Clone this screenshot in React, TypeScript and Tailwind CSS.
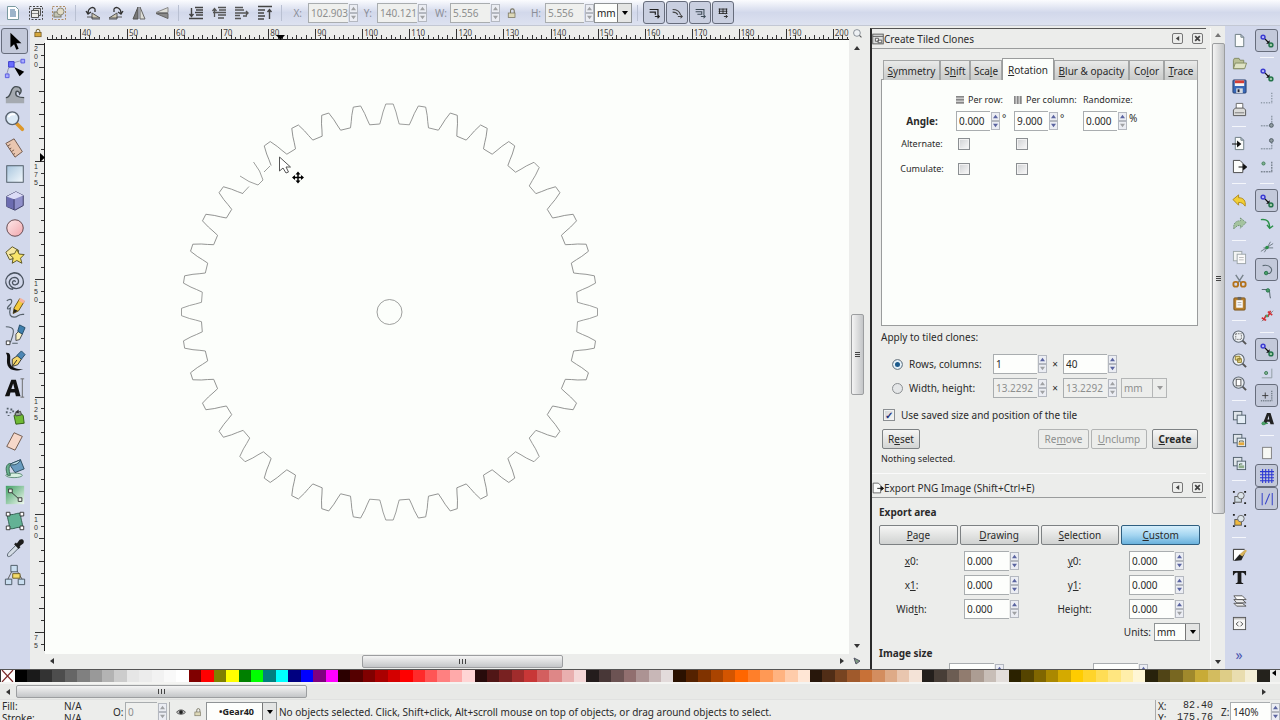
import type { ReactNode } from "react";

const bar = "bg-[#d2d8eb]";

/* ---------- icons, drawn on a 16px grid ---------- */

const sheet = <path d="M3.5 1.5h6l3 3v10h-9z M9.5 1.5v3h3" fill="#fbfcfb" stroke="#6b7b80" />;

const node = (
  <>
    <path d="M5 5l5 5" stroke="#111" strokeWidth="1.4" />
    <path d="M11 7v4H7z" fill="#111" />
    <circle cx="3.5" cy="3.5" r="2.2" fill="#b9bdfb" stroke="#3c3cd0" strokeWidth="1.7" />
    <circle cx="12.5" cy="12.5" r="2.2" fill="#9cc8a4" stroke="#23734a" strokeWidth="1.7" />
  </>
);

const lens = (
  <>
    <path d="M11 11l4 4" stroke="#555" strokeWidth="2" />
    <circle cx="7" cy="7" r="6" fill="#eef1f4" stroke="#5c6570" strokeWidth="1.2" />
  </>
);

const padlock = (
  <>
    <path d="M5 7V5a3 3 0 0 1 6 0v2" fill="none" stroke="#6f6132" strokeWidth="1.6" />
    <rect x="3" y="7" width="10" height="7" fill="#d6a83c" stroke="#5b4614" />
  </>
);

const openLock = (
  <>
    <path d="M6 8V5a2.5 2.5 0 0 1 5 0v3" fill="none" stroke="#77735f" strokeWidth="1.4" />
    <rect x="3" y="8" width="9" height="6" fill="#ddd8b8" stroke="#77735f" />
  </>
);

const copies = (
  <>
    <rect x="1.5" y="1.5" width="9" height="9" fill="#dfe5ea" stroke="#51606c" />
    <rect x="5.5" y="5.5" width="9" height="9" fill="#e4edf5" stroke="#51606c" />
  </>
);

const groupBox = (fill: string) => (
  <>
    <path d="M1 1h2v2H1zM13 1h2v2h-2zM1 13h2v2H1zM13 13h2v2h-2z" fill="#222" />
    <rect x="3" y="7" width="7" height="6" fill={fill} stroke="#555" />
    <circle cx="9.5" cy="6" r="3.5" fill="#dce4ea" stroke="#666" />
  </>
);

const icons: Record<string, ReactNode> = {
  // selector bar
  layers: (
    <>
      <path d="M2.5 1.5h8l3 3v10h-11z" fill="#fff" stroke="#7a9aa0" />
      <path d="M5 5h5M5 7h6M5 9h6M5 11h6" stroke="#3c6a96" strokeWidth="1.2" />
    </>
  ),
  selectAll: (
    <>
      <rect x="1.5" y="1.5" width="13" height="13" fill="none" stroke="#444" strokeDasharray="2 1.5" />
      <path d="M5.500 3.500h7v7h-7z" fill="#d9d9d6" stroke="#555" />
      <path d="M3.500 5.500h7v7h-7z" fill="#ececea" stroke="#555" />
      <path d="M4 8.500h6" stroke="#888" />
    </>
  ),
  selectLayer: (
    <>
      <rect x="1.5" y="1.5" width="13" height="13" fill="none" stroke="#ae8b63" strokeDasharray="2 1.5" />
      <rect x="3" y="7" width="7" height="5" fill="#c3c5b5" stroke="#7a7868" />
      <circle cx="9.5" cy="6.5" r="3.5" fill="#e2dcc6" stroke="#8a8878" />
    </>
  ),
  rotateLeft: (
    <>
      <path d="M7 8l8 5H7z" fill="#cfc9b4" stroke="#555" />
      <path d="M3 8C3 3 8 1 10 4v3M1 6l2 3 3-2" fill="none" stroke="#333" strokeWidth="1.3" />
      <path d="M2 12h5v2h8" stroke="#555" />
    </>
  ),
  rotateRight: (
    <>
      <path d="M9 8l-8 5h8z" fill="#cfc9b4" stroke="#555" />
      <path d="M13 8c0-5-5-7-7-4v3M15 6l-2 3-3-2" fill="none" stroke="#333" strokeWidth="1.3" />
      <path d="M14 12H9v2H1" stroke="#555" />
    </>
  ),
  flipH: (
    <>
      <path d="M7 2v12H2z" fill="#777" stroke="#555" />
      <path d="M9 2v12h5z" fill="#deded8" stroke="#666" />
    </>
  ),
  flipV: (
    <>
      <path d="M2 7.5l12-5v5z" fill="#deded8" stroke="#888" />
      <path d="M2 8.5l12 5v-5z" fill="#8a8a8a" stroke="#666" />
    </>
  ),
  toBottom: <path d="M7 2.500h8M8 5h7M7 7.500h8M8 10h7M1 13.500h14M3.500 3v8M1.500 9l2 2.500 2-2.500" fill="none" stroke="#444" strokeWidth="1.4" />,
  lower: <path d="M7 2.500h8M8 5h7M2 7.500h13M7 10h8M7 13h6M3.500 4v8M1.500 6l2-2.500 2 2.500" fill="none" stroke="#555" strokeWidth="1.3" />,
  raise: <path d="M1 2.500h8M1 5h9M1 8h13M1 10.500h5M1 13.500h6M12 10l2-2-2-2M9 11h4" fill="none" stroke="#555" strokeWidth="1.4" />,
  toTop: <path d="M1 1.500h14M1 5h7M1 8h6M1 11h7M1 14h6M12.500 14V5M10.500 7l2-2.500 2 2.500" fill="none" stroke="#444" strokeWidth="1.4" />,
  scaleStroke: <path d="M3 4h9.500v6M3 7h6.500v3M9 12h5M12 10l2 2-2 2" fill="none" stroke="#222" strokeWidth="1.4" />,
  scaleRadius: <path d="M3 4c5 0 8 2 9 6M3 7c3 0 5 1 6 3M9 12h5M12 10l2 2-2 2" fill="none" stroke="#444" strokeWidth="1.2" />,
  moveGradient: <path d="M3 4h9.500v6M3 6.500h7v3H5M9 12h5M12 10l2 2-2 2" fill="none" stroke="#3c4a55" strokeWidth="1.2" />,
  movePattern: <path d="M3 3.500h10M3 6h10M3 8.500h10M4 3v6M8 3v6M12 3v6M9 12h4M11 10l2 2-2 2" fill="none" stroke="#222" />,

  // commands bar
  new: sheet,
  open: (
    <>
      <path d="M1.500 4.500l1-2h5l1 2h4v9h-11z" fill="#bac096" stroke="#818a62" />
      <path d="M3.500 7.500h12l-2 6h-12z" fill="#dfe3c4" stroke="#818a62" />
    </>
  ),
  save: (
    <>
      <rect x="1" y="1" width="14" height="14" rx="1" fill="#3868b8" stroke="#27406e" />
      <path d="M3 1.500h10v6H3z" fill="#f5f5f5" />
      <path d="M3 1.500h10v3H3z" fill="#d43d35" />
      <path d="M4.500 10h7v5h-7z" fill="#d5dae0" />
      <path d="M6 11h2v3H6z" fill="#223" />
    </>
  ),
  print: (
    <>
      <path d="M4.500 1.500h7v6h-7z" fill="#fff" stroke="#666" />
      <path d="M1.500 8.500l2-2h9l2 2v6h-13z" fill="#dcdcda" stroke="#555" />
      <path d="M3 11.500h10" stroke="#777" />
    </>
  ),
  import: (
    <>
      {sheet}
      <path d="M0 8.500h8M6 6l3 2.500L6 11z" fill="#111" stroke="#111" strokeWidth="1.2" />
    </>
  ),
  export: (
    <>
      <path d="M1.500 1.500h7l3 3v10h-10z" fill="#fbfcfb" stroke="#444" />
      <path d="M7 8.500h7M12.500 6l3 2.500-3 2.500z" fill="#111" stroke="#111" strokeWidth="1.2" />
    </>
  ),
  undo: <path d="M1 7l6-5v3c5 0 8 3 7 9-2-3-4-4-7-4v3z" fill="#f2cf35" stroke="#b08a1c" />,
  redo: <path d="M15 7L9 2v3c-5 0-8 3-7 9 2-3 4-4 7-4v3z" fill="#a4c39f" stroke="#6c8d70" strokeDasharray="1.5 1" />,
  copy: (
    <>
      <rect x="1.5" y="1.5" width="9" height="10" fill="#f3f4f3" stroke="#9da5a8" />
      <rect x="5.5" y="4.5" width="9" height="10" fill="#fafafa" stroke="#9da5a8" />
      <path d="M7.500 8h5M7.500 10.500h5" stroke="#bbb" />
    </>
  ),
  cut: (
    <>
      <path d="M4 2l6 9M12 2L6 11" stroke="#77828a" strokeWidth="1.5" />
      <rect x="1.5" y="9.5" width="5" height="5" rx="2" fill="none" stroke="#b3721c" strokeWidth="2" />
      <rect x="9.5" y="9.5" width="5" height="5" rx="2" fill="none" stroke="#b3721c" strokeWidth="2" />
    </>
  ),
  paste: (
    <>
      <rect x="2" y="2" width="12" height="13" rx="1" fill="#b9812e" stroke="#7c531a" />
      <path d="M4.500 4.500h7v8h-7z" fill="#fafafa" />
      <path d="M6 1h4v3H6z" fill="#666" />
      <path d="M6 7h4M6 9.500h4" stroke="#aaa" />
    </>
  ),
  zoomSel: (
    <>
      {lens}
      <rect x="4" y="4" width="6" height="6" fill="none" stroke="#666" strokeDasharray="1.5 1" />
    </>
  ),
  zoomDraw: (
    <>
      {lens}
      <path d="M3.500 3.500h5v4h-5zM6 6h4v4H6z" fill="#eadb8e" stroke="#8c7a2c" />
    </>
  ),
  zoomPage: (
    <>
      {lens}
      <rect x="4.5" y="3.5" width="5" height="7" fill="#fff" stroke="#555" />
    </>
  ),
  duplicate: copies,
  clone: (
    <>
      {copies}
      <path d="M8 10V8.500h4V10" fill="none" stroke="#664" />
      <path d="M7 10h6v3H7z" fill="#e6aa3c" />
    </>
  ),
  unlink: (
    <>
      {copies}
      <path d="M8 10V8.500h3" fill="none" stroke="#464" />
      <path d="M7 10h6v3H7z" fill="#8fae8b" />
    </>
  ),
  group: groupBox("#d2dee5"),
  ungroup: groupBox("#f0b93c"),
  fillStroke: (
    <>
      <path d="M1 2h13L1 15z" fill="#fff" />
      <path d="M1.500 14.500v-12h12" fill="none" stroke="#222" />
      <path d="M2 15L8 8l6-2-4 8z" fill="#222" />
      <path d="M8 8l6-5 2 1-5 6z" fill="#d8b35c" />
    </>
  ),
  textTool: <path d="M1 1h14v4.500h-1C13.500 3.500 12.500 3 10 3v9.500c0 1 .5 1.500 2 1.500v1H4v-1c1.500 0 2-.5 2-1.500V3c-2.500 0-3.500.5-4 2.500H1z" fill="#1c1c1c" />,
  layersDlg: (
    <>
      <path d="M2 11h9l4 3H5z" fill="#eee" stroke="#555" />
      <path d="M2 7h9l4 3.500H5z" fill="#eee" stroke="#555" />
      <path d="M2 3h9l4 4H5z" fill="#fff" stroke="#555" />
    </>
  ),
  xml: (
    <>
      <rect x="1.5" y="1.5" width="13" height="13" fill="#f7f7f7" stroke="#555" />
      <path d="M2 3h12" stroke="#aaa" />
      <path d="M7 6L4.500 8.500 7 11M9 6l2.500 2.500L9 11" fill="none" stroke="#444" />
    </>
  ),

  // snap bar
  snap: node,
  snapBox: <path d="M1 13.500h13M13.500 2v11" stroke="#687781" strokeDasharray="1.5 1.5" />,
  snapEdge: (
    <>
      <path d="M1 13.500h13M13.500 2v11" stroke="#687781" strokeDasharray="2 1" />
      <circle cx="13" cy="13" r="2.2" fill="#8e9a9f" stroke="#4b5860" />
    </>
  ),
  snapCorner: (
    <>
      <path d="M1 13.500h12.500V2" fill="none" stroke="#687781" strokeDasharray="2 1" />
      <circle cx="13" cy="4" r="2.2" fill="#8e9a9f" stroke="#4b5860" />
    </>
  ),
  snapCenter: (
    <>
      <path d="M1 13.500h13M13.500 2v11" stroke="#46525a" strokeDasharray="2 1" />
      <circle cx="4" cy="4" r="1.8" fill="#7fb08f" stroke="#3b7a55" />
    </>
  ),
  snapPath: <path d="M1 3c7-1 10 2 10 10M8 9l3 4 4-3" fill="none" stroke="#2b9049" strokeWidth="1.6" />,
  snapCross: (
    <>
      <path d="M1 13L15 4M4 9h11M5 14l7-12" stroke="#66737c" />
      <circle cx="8" cy="8.5" r="2" fill="#2b9049" />
    </>
  ),
  snapCusp: (
    <>
      <path d="M3 3c9-2 13 5 8 9H6" fill="none" stroke="#5c6a74" strokeWidth="1.2" />
      <circle cx="7" cy="11.5" r="2" fill="#4b9c68" stroke="#23734a" />
    </>
  ),
  snapSmooth: (
    <>
      <path d="M2 4h6c5 0 2 6 4 10" fill="none" stroke="#5c6a74" strokeWidth="1.2" />
      <circle cx="9" cy="5" r="2" fill="#4b9c68" stroke="#23734a" />
    </>
  ),
  snapMid: (
    <>
      <path d="M2 14l4-4M10 7l5-5" stroke="#777" />
      <path d="M2 10l5 3M9 3l5 4M4 13l3-6M9 9l3-7" stroke="#d12f33" strokeWidth="1.7" />
      <circle cx="8" cy="8" r="1.6" fill="#4b9c68" />
    </>
  ),
  snapObj: (
    <>
      <path d="M2 13.500h11.500V3" fill="none" stroke="#8c989e" />
      <circle cx="7" cy="8" r="1.8" fill="#7fb08f" stroke="#3b7a55" />
    </>
  ),
  snapRot: (
    <>
      <path d="M1 13.500h13M13.500 2v11" stroke="#46525a" strokeDasharray="1.5 1" />
      <path d="M6 4v7M2.500 7.500h7" stroke="#333" />
    </>
  ),
  snapText: (
    <>
      <path d="M3 14L8 1h4l4 13h-4l-1-3H8l-1 3zM8.500 8.500h2L10 4z" fill="#222" fillRule="evenodd" />
      <path d="M2 13h7" stroke="#2b9049" strokeWidth="1.3" />
      <circle cx="4" cy="13" r="2.2" fill="#4b9c68" />
    </>
  ),
  snapPage: <rect x="3" y="1.5" width="10" height="13" fill="#f7f8f4" stroke="#777" />,
  snapGrid: <path d="M3 0v16M6.500 0v16M10 0v16M13.500 0v16M0 3h16M0 6.500h16M0 10h16M0 13.500h16" stroke="#2a36d4" strokeWidth="1.2" />,
  snapGuide: <path d="M2.500 1v14M6 14L11 2M14 1v14" stroke="#3b48c9" strokeWidth="1.2" />,

  // small ones
  padlock,
  openLock,
  lens,
  eye: (
    <>
      <path d="M1 8.500c3-5 11-5 14 0-3 4-11 4-14 0z" fill="#bbb" stroke="#333" strokeWidth="1.3" />
      <circle cx="8" cy="8" r="3" fill="#222" />
    </>
  ),
  clones: (
    <>
      <rect x="1" y="1.5" width="14" height="13" fill="#dcdedd" stroke="#555" strokeWidth="1.2" />
      <path d="M1 4.500h14M4.500 7h4v4h-4zM8 9.500h5v3.500H8z" fill="#f6f6f6" stroke="#555" strokeWidth="1.2" />
    </>
  ),
};

/* ---------- toolbox, drawn on a 24px grid ---------- */

const tools: [string, ReactNode][] = [
  ["Select", <path d="M7 3v16l4-3.500 2.500 6 2.500-1-2.500-6H19z" fill="#000" />],
  [
    "Edit nodes",
    <>
      <path d="M3 21C4 9 9 5 21 4" fill="none" stroke="#8c92a8" />
      <path d="M1.500 18.500h4v4h-4zM18.500 2.500h4v4h-4z" fill="#a9acff" stroke="#5558e0" />
      <path d="M5 5h6v6H5z" fill="#6a6dff" stroke="#3436c8" />
      <path d="M11 11l11 5-5 5z" fill="#000" />
    </>,
  ],
  [
    "Tweak",
    <>
      <path d="M2 16c7 0 4-12 11-12 6 0 7 5 4 8 0-3-3-4-4-2-1 4 2 6 9 6v6H2z" fill="#a5aab0" />
      <path d="M2 16c7 0 4-12 11-12 6 0 7 5 4 8 0-3-3-4-4-2-1 4 2 6 9 6" fill="none" stroke="#444c50" strokeWidth="1.5" />
    </>,
  ],
  [
    "Zoom",
    <>
      <path d="M14 15l6 6" stroke="#dd982a" strokeWidth="4" strokeLinecap="round" />
      <circle cx="9" cy="9" r="7" fill="#dceaf6" stroke="#58626e" strokeWidth="1.5" />
      <path d="M5 8c1-3 4-4 7-3" fill="none" stroke="#fff" strokeWidth="2" />
    </>,
  ],
  [
    "Measure",
    <>
      <path d="M2 7l9-5 9 14-8 6z" fill="#e9c6b0" stroke="#6b5346" />
      <path d="M4 10l3-2M6 13l2-1M8 16l3-2M10 19l2-1" stroke="#6b5346" />
    </>,
  ],
  ["Rectangle", <rect x="3" y="3" width="18" height="18" fill="url(#blue)" stroke="#47545f" />],
  [
    "3D box",
    <>
      <path d="M3 7l10-5 8 4v11l-9 5-9-4z" fill="#8f8fc9" stroke="#34345e" />
      <path d="M3 7l8 3v11l-8-3z" fill="#6c6cb0" />
      <path d="M3 7l10-5 8 4-10 4z" fill="#dcdcf6" />
      <path d="M11 10v11" stroke="#34345e" />
    </>,
  ],
  ["Ellipse", <circle cx="12" cy="12" r="9" fill="url(#pink)" stroke="#5d4146" />],
  [
    "Star",
    <>
      <path d="M2 9l7-6 7 4-2 8-8 2z" fill="#f6e7a0" stroke="#55501f" />
      <path d="M14 6l2.500 5 5.500.5-4 4 1.500 5.500-5.500-3-5 3 1-6-4-3.500 5.500-1z" fill="#f9e46a" stroke="#55501f" />
    </>,
  ],
  [
    "Spiral",
    <path
      d="M12 13c1-1-1-2-2-1-2 2 0 5 3 4 4-1 4-7-1-8-5 0-8 5-5 9 4 5 12 4 14-2 1-7-4-12-10-12C5 4 1 9 2 14c1 4 4 7 8 7"
      fill="none"
      stroke="#4a5360"
      strokeWidth="1.4"
    />,
  ],
  [
    "Pencil",
    <>
      <path d="M3 4c6-4 7 1 3 5s-2 5 1 3c-2 7 0 10 4 10 5 0 4-4 11-3" fill="none" stroke="#56616b" strokeWidth="1.3" />
      <path d="M10 18l1-6 6-10 5 3-6 10z" fill="#f4ca3c" stroke="#5e4b12" />
      <path d="M10 18l1-5 4 2z" fill="#222" />
      <path d="M16 4l2-3 5 3-2 3z" fill="#f6b29c" />
    </>,
  ],
  [
    "Bezier",
    <>
      <path d="M2 3c10 0 10 4 5 17M9 21h6" fill="none" stroke="#56616b" strokeWidth="1.2" />
      <path d="M2.500 18.500h4v4h-4z" fill="#fff" stroke="#333" />
      <path d="M13 18l0-7 3-3 4 3-3 6z" fill="#f6efc2" stroke="#444" />
      <path d="M15 8l2-7 6 3-3 7z" fill="#3f7fae" stroke="#234a66" />
    </>,
  ],
  [
    "Calligraphy",
    <>
      <path d="M2 3c7-1 4 6 5 12 1 4 6 6 14 6-9 3-15 1-17-4C2 11 5 7 2 3z" fill="#111" />
      <path d="M9 18l0-8 6-4 4 4-4 6z" fill="#f5d76b" stroke="#333" />
      <path d="M14 6l5-5 4 4-4 5z" fill="#4c86b4" stroke="#234a66" />
      <path d="M9 18l5-7" stroke="#222" />
    </>,
  ],
  [
    "Text",
    <>
      <path d="M1 21L8 3h5l5 18h-5l-1-4H7l-1 4zM8 13h3.500L10 7z" fill="#111" fillRule="evenodd" />
      <path d="M18 2h4M20 2v20M18 22h4" stroke="#666" />
    </>,
  ],
  [
    "Spray",
    <>
      <path d="M11 13c0-3 9-4 10 0l1 8-9 1z" fill="#6fba35" stroke="#2e5a14" />
      <path d="M12 10l6-2 1 4-6 1z" fill="#9aa59c" stroke="#444" />
      <path d="M12 9l4-3v4z" fill="#333" />
      <path d="M3 4h2v2H3zM7 5h2v2H7zM2 8h2v2H2zM6 9h2v1H6zM9 7h2v2H9zM4 12h2v1H4z" fill="#56616b" />
    </>,
  ],
  ["Eraser", <path d="M3 18L11 3l9 4-8 15z" fill="#f7d8c9" stroke="#6b5346" />],
  [
    "Paint bucket",
    <>
      <ellipse cx="11" cy="20" rx="9" ry="2.5" fill="#d7efe0" stroke="#5a8a74" />
      <path d="M6 8l12-5 4 10-10 4z" fill="#6a9cc0" stroke="#29485c" />
      <path d="M6 8l12-5c-1 4-7 7-12 5z" fill="#bfe0e8" stroke="#29485c" />
      <path d="M6 7c-5 2-4 8-2 13h3c-2-6-2-9 0-12z" fill="#68b08c" stroke="#356a50" />
    </>,
  ],
  [
    "Gradient",
    <>
      <rect x="2" y="2" width="20" height="20" fill="url(#green)" />
      <path d="M7 8l10 9" stroke="#333" />
      <path d="M5 5.500h4v4H5zM15.500 15h4v4h-4z" fill="#eef6ee" stroke="#333" />
    </>,
  ],
  [
    "Mesh",
    <>
      <path d="M4 4c7 3 9-2 15 0-2 6 2 9 1 16-6-3-9 2-15 0 2-6-2-9-1-16z" fill="#63b295" stroke="#2b5a4a" />
      <path d="M2.500 2.500h4v4h-4zM17.500 2.500h4v4h-4zM2.500 17.500h4v4h-4zM17.500 17.500h4v4h-4z" fill="#fff" stroke="#333" />
    </>,
  ],
  [
    "Dropper",
    <>
      <path d="M4 21c-1-2 1-4 2-5l7-7 3 3-7 7c-2 2-4 3-5 2z" fill="#d5dde6" stroke="#4e5a66" />
      <path d="M11 8l2-2 1 1 3-4c3-2 6 1 4 4l-4 3 1 1-2 2z" fill="#1c1c1c" />
    </>,
  ],
  [
    "Connector",
    <>
      <path d="M9 7L4 17M14 7l6 10" stroke="#555" />
      <path d="M7.500 1.500h7v7h-7zM1.500 16.500h7v6h-7zM15.500 16.500h7v6h-7z" fill="#c9def0" stroke="#47545f" />
      <path d="M9.500 10.500h8v5h-8z" fill="#f5dc6a" stroke="#6a5a1c" />
    </>,
  ],
];

const commands = [
  "new open save print", "import export", "undo redo", "copy cut paste",
  "zoomSel zoomDraw zoomPage", "duplicate clone unlink", "group ungroup",
  "fillStroke textTool layersDlg xml",
].map((g) => g.split(" "));

// a trailing * marks a toggle that is switched on
const snaps = [
  "snap*", "snap snapBox snapEdge snapCorner snapCenter",
  "snap* snapPath snapCross snapCusp* snapSmooth snapMid",
  "snap* snapObj snapRot* snapText", "snapPage snapGrid* snapGuide*",
].map((g) => g.split(" "));

const palette = (
  "000000 1a1a1a 333333 4d4d4d 666666 808080 999999 b3b3b3 cccccc e6e6e6 ececec f2f2f2 f9f9f9 ffffff " +
  "800000 ff0000 808000 ffff00 008000 00ff00 008080 00ffff 000080 0000ff 800080 ff00ff " +
  "2b0000 550000 800000 aa0000 d40000 ff0000 ff2a2a ff5555 ff8080 ffaaaa ffd5d5 " +
  "280b0b 501616 782121 a02c2c c83737 d35f5f de8787 e9afaf f4d7d7 " +
  "241c1c 483737 6c5353 916f6f ac9393 c8b7b7 e3dbdb " +
  "2b1100 552200 803300 aa4400 d45500 ff6600 ff7f2a ff9955 ffb380 ffccaa ffe6d5 " +
  "28170b 502d16 784421 a05a2c c87137 d38d5f deaa87 e9c6af f4e3d7 " +
  "241f1c 483e37 6c5d53 917c6f ac9d93 c8beb7 e3dedb " +
  "2b2200 554400 806600 aa8800 d4aa00 ffcc00 ffd42a ffdd55 ffe680 ffeeaa fff6d5 " +
  "28220b 504416 786721 a0892c c8ab37 d3bc5f decd87 e9ddaf f4eed7 24221c"
).split(" ");

/* ---------- widgets ---------- */

function Icon({ name, className = "size-4" }: { name: string; className?: string }) {
  return (
    <svg viewBox="0 0 16 16" className={`${className} shrink-0`} fill="none" aria-hidden="true">
      {icons[name]}
    </svg>
  );
}

const arrows = {
  up: "M0 5L3 1l3 4z",
  down: "M0 1l3 4 3-4z",
  left: "M5 0L1 3l4 3z",
  right: "M1 0l4 3-4 3z",
};

function Arrow({ dir, className = "size-1.5 text-[#333]" }: { dir: keyof typeof arrows; className?: string }) {
  return (
    <svg viewBox="0 0 6 6" className={`${className} shrink-0`} aria-hidden="true">
      <path d={arrows[dir]} fill="currentColor" />
    </svg>
  );
}

function Spin({ id, label, value, width, disabled = false, atMin = false }: {
  id?: string;
  label?: string;
  value: string;
  width: string;
  disabled?: boolean;
  atMin?: boolean;
}) {
  const btn = "flex flex-1 items-center justify-center border border-[#b4b8c0] bg-[#ebedf3]";
  const on = "size-[5px] text-[#5a64a0]";
  const off = "size-[5px] text-[#a0a2a4]";

  return (
    <span className={`flex h-5 shrink-0 gap-px ${width}`}>
      <input
        id={id}
        aria-label={label}
        defaultValue={value}
        disabled={disabled}
        className={`min-w-0 flex-1 border border-r-0 border-[#a9adaf] pl-0.5 ${
          disabled ? "bg-[#eff0ee] text-[#8d8f8e]" : "bg-[#fdfefc] text-[#2a2a2a]"
        }`}
      />
      <span className="flex w-[9px] flex-col py-px">
        <button aria-label="Increase" disabled={disabled} className={btn}>
          <Arrow dir="up" className={disabled ? off : on} />
        </button>
        <button aria-label="Decrease" disabled={disabled || atMin} className={btn}>
          <Arrow dir="down" className={disabled || atMin ? off : on} />
        </button>
      </span>
    </span>
  );
}

function Combo({ id, label, value, className, disabled = false }: {
  id?: string;
  label?: string;
  value: string;
  className: string;
  disabled?: boolean;
}) {
  return (
    <span
      className={`relative flex shrink-0 border ${className} ${
        disabled ? "border-[#b4b6b6] text-[#8d8f8e]" : "border-[#8f9395] bg-[#fdfefc] text-[#222]"
      }`}
    >
      <select id={id} aria-label={label} disabled={disabled} className="min-w-0 flex-1 appearance-none bg-transparent pl-0.5">
        <option>{value}</option>
      </select>
      <span
        className={`pointer-events-none absolute inset-y-0 right-0 flex w-3.5 items-center justify-center border-l ${
          disabled ? "border-[#b4b6b6]" : "border-[#777] bg-[#e4e5e4]"
        }`}
      >
        <Arrow dir="down" className={disabled ? "size-1.5 text-[#999]" : "size-1.5 text-black"} />
      </span>
    </span>
  );
}

function Check({ label, id, checked = false }: { label?: string; id?: string; checked?: boolean }) {
  return (
    <input
      type="checkbox"
      id={id}
      aria-label={label}
      defaultChecked={checked}
      className="size-3 shrink-0 appearance-none border border-[#8b8f92] bg-linear-to-br from-[#cfd1d3] to-[#fafafa] text-center text-[10px] leading-[10px] font-bold text-[#26357c] shadow-[inset_0_0_0_1px_#f2f2f2] checked:before:content-['✓']"
    />
  );
}

function Radio({ id, checked = false }: { id: string; checked?: boolean }) {
  return (
    <input
      type="radio"
      name="tile-mode"
      id={id}
      defaultChecked={checked}
      className="size-[11px] shrink-0 appearance-none rounded-full border border-[#8b8f92] bg-[#e4e6e7] checked:bg-[#1c5a8c] checked:shadow-[inset_0_0_0_2px_#e8f2f8]"
    />
  );
}

// Underlines the mnemonic letter
function Mn({ text, at }: { text: string; at?: number }) {
  if (at === undefined) return <span>{text}</span>;

  return (
    <span>
      {text.slice(0, at)}
      <u>{text[at]}</u>
      {text.slice(at + 1)}
    </span>
  );
}

const Sep = () => <span className="mx-[5px] h-4 w-px shrink-0 bg-[#b9c0d2]" />;

const button = "h-5 rounded-[2px] border border-[#7d8183] bg-linear-to-b from-[#f6f6f5] to-[#d3d5d4]";

/* ---------- selector bar ---------- */

function IconRow({ names }: { names: string }) {
  return names.split(" ").map((n) => (
    <button key={n} aria-label={n} className="flex w-[23px] shrink-0 justify-center">
      <Icon name={n} />
    </button>
  ));
}

function SelectorBar() {
  const lbl = "shrink-0 text-right text-[#8b8e98]";

  return (
    <header className="flex h-[26px] shrink-0 items-center border-b border-[#c3c8d4] bg-linear-to-b from-[#fbfcfe] via-[#d2d8eb] to-[#dde2f0] pl-px">
      <IconRow names="layers selectAll selectLayer" />
      <Sep />
      <IconRow names="rotateLeft rotateRight flipH flipV" />
      <Sep />
      <IconRow names="toBottom lower raise toTop" />
      <Sep />
      <label htmlFor="x" className={`w-[15px] ${lbl}`}>X:</label>
      <span className="w-1.5 shrink-0" />
      <Spin id="x" value="102.903" width="w-[50px]" disabled />
      <label htmlFor="y" className={`w-3.5 ${lbl}`}>Y:</label>
      <span className="w-[5px] shrink-0" />
      <Spin id="y" value="140.121" width="w-[50px]" disabled />
      <label htmlFor="w" className={`w-5 ${lbl}`}>W:</label>
      <span className="w-[3px] shrink-0" />
      <Spin id="w" value="5.556" width="w-[50px]" disabled />
      <button aria-label="Lock ratio" className="flex w-6 shrink-0 justify-center">
        <Icon name="openLock" className="size-3" />
      </button>
      <label htmlFor="h" className={`w-[17px] ${lbl}`}>H:</label>
      <span className="w-1 shrink-0" />
      <Spin id="h" value="5.556" width="w-[49px]" disabled />
      <Combo label="Unit" value="mm" className="h-5 w-[38px]" />
      <Sep />
      {["scaleStroke", "scaleRadius", "moveGradient", "movePattern"].map((n) => (
        <button
          key={n}
          aria-label={n}
          aria-pressed="true"
          className="mr-px flex h-[23px] w-[22px] shrink-0 items-center justify-center rounded-[3px] border border-[#676d7c] bg-[#c9cfe0]"
        >
          <Icon name={n} className="size-3.5" />
        </button>
      ))}
    </header>
  );
}

/* ---------- canvas ---------- */

const MM = 4.705;

function TopRuler() {
  const ticks = Array.from({ length: 171 }, (_, i) => i + 33);

  return (
    <svg width="805" height="14" className="shrink-0" viewBox="45 0 805 14">
      <path d="M47 13.500h803" stroke="#222" />
      {ticks.map((t) => {
        const x = Math.round(80 + (t - 40) * MM) + 0.5;
        if (x < 47) return null;
        const h = t % 10 === 0 ? 11 : t % 2 === 0 ? 5 : 3;
        return <path key={t} d={`M${x} 14v-${h}`} stroke="#333" />;
      })}
      {ticks.filter((t) => t % 10 === 0).map((t) => (
        <text key={t} x={82 + (t - 40) * MM} y="10" fontSize="8" fill="#444">{t}</text>
      ))}
      <path d="M276 9h9l-4.500 5z" fill="#000" />
    </svg>
  );
}

function SideRuler() {
  const ticks = Array.from({ length: 53 }, (_, i) => i);

  return (
    <svg width="15" height="613" className="shrink-0" viewBox="30 40 15 613">
      <path d="M44.500 43v608" stroke="#222" />
      {ticks.map((i) => {
        const y = Math.round(43.5 + i * 11.77) + 0.5;
        if (y > 650) return null;
        const w = i % 10 === 0 ? 9 : i % 2 === 0 ? 5 : 3;
        return <path key={i} d={`M44 ${y}h-${w}`} stroke="#333" />;
      })}
      {[200, 175, 150, 125, 100, 75].map((n, i) =>
        [...String(n)].map((c, j) => (
          <text
            key={`${n}-${j}`}
            x="34"
            y={51 + Math.round(i * 117.7) + j * 8}
            fontSize="7"
            fill="#333"
            className="font-['Liberation_Sans',sans-serif]"
          >
            {c}
          </text>
        ))
      )}
      <path d="M40 153v9l5-4.500z" fill="#000" />
    </svg>
  );
}

// One tooth pointing up, with the root that leads to the next one
const tooth = "M-9.700-188L-8-194-6.500-200-3.700-208H3.700L6.500-200 8-194 9.700-188";
const root = "M9.700-188L19.800-187.200";

function Drawing() {
  const teeth = Array.from({ length: 40 }, (_, i) => i).filter((i) => i !== 35);

  return (
    <svg width="805" height="613" viewBox="45 40 805 613" className="absolute inset-0" fill="none">
      <g transform="translate(389.500 312)" stroke="#858685" strokeWidth="0.8">
        {teeth.map((i) => (
          <path key={i} d={i === 34 ? tooth : `${tooth} ${root}`} transform={`rotate(${i * 9})`} />
        ))}
        <path d="M-146.500-119l6-6.500M-125.500-140l6-6" />
        <path d="M-136-150l6 9 3.500 9-5 5-9-3.500-9-5.500" />
        <circle r="12.5" />
      </g>
      <path d="M279.500 157v14l3.500-3 3 5 2.500-1-2.500-5h4.500z" fill="#fff" stroke="#555" />
      <path d="M293.500 177.500h9M298 173v9" stroke="#000" strokeWidth="1.5" />
      <path d="M292 177.500l3-2.500v5zM304 177.500l-3-2.500v5zM298 171.500l-2.500 3h5zM298 183.500l-2.500-3h5z" fill="#000" />
    </svg>
  );
}

const Grip = ({ vertical = false }: { vertical?: boolean }) => (
  <span
    className={`flex justify-between ${
      vertical
        ? "h-[5px] w-[5px] flex-col *:h-px *:w-full"
        : "h-[5px] w-[7px] *:h-full *:w-px"
    } *:bg-[#444]`}
  >
    <i /><i /><i />
  </span>
);

const thumbH = "flex items-center justify-center rounded-[2px] border border-[#9c9ea0] bg-linear-to-b from-[#f4f4f4] to-[#c4c6c8]";
const thumbV = "flex w-[13px] items-center justify-center rounded-[2px] border border-[#9c9ea0] bg-linear-to-r from-[#f4f4f4] to-[#c4c6c8]";

function Canvas() {
  return (
    <main className="flex min-w-0 flex-1 flex-col bg-[#ecedeb]">
      <div className="flex h-3.5 shrink-0 items-center overflow-hidden">
        <span className="flex w-[15px] shrink-0 justify-center">
          <Icon name="padlock" className="size-2.5" />
        </span>
        <div className="min-w-0 flex-1 overflow-hidden"><TopRuler /></div>
        <span className="flex w-4 shrink-0 justify-center">
          <Icon name="lens" className="size-[9px]" />
        </span>
      </div>
      <div className="flex min-h-0 flex-1">
        <div className="w-[15px] shrink-0 overflow-hidden"><SideRuler /></div>
        <div className="relative min-w-0 flex-1 overflow-hidden bg-[#fcfefb]"><Drawing /></div>
        <div className="flex w-4 shrink-0 flex-col items-center py-[5px]">
          <Arrow dir="up" />
          <span className="grow-[260]" />
          <span className={`h-[81px] ${thumbV}`}><Grip vertical /></span>
          <span className="grow-[246]" />
          <Arrow dir="down" />
        </div>
      </div>
      <div className="flex h-[15px] shrink-0 items-center pb-px pl-[19px]">
        <Arrow dir="left" />
        <span className="grow-[308]" />
        <span className={`h-[13px] w-[201px] ${thumbH}`}><Grip /></span>
        <span className="grow-[277]" />
        <Arrow dir="right" />
        <span className="flex w-5 justify-center pl-1">
          <svg viewBox="0 0 8 8" className="size-2"><path d="M1 1l6 3-4 3z" fill="#7c9a80" stroke="#556" /></svg>
        </span>
      </div>
    </main>
  );
}

/* ---------- dock ---------- */

function PanelTitle({ icon, children }: { icon: string; children: ReactNode }) {
  const small = "flex size-[11px] items-center justify-center rounded-[2px] border border-[#777] text-[#444]";

  return (
    <div className="flex h-5 items-center border-b border-[#9a9c9c] pr-[3px]">
      <Icon name={icon} className="size-3" />
      <h2 className="flex-1 text-[#2c2c2c]">{children}</h2>
      <button aria-label="Iconify" className={`mr-[9px] ${small}`}>
        <Arrow dir="left" className="size-[5px]" />
      </button>
      <button aria-label="Close" className={small}>
        <svg viewBox="0 0 6 6" className="size-[7px]"><path d="M1 1l4 4M5 1L1 5" stroke="currentColor" strokeWidth="1.5" /></svg>
      </button>
    </div>
  );
}

const tabs: [string, number, string][] = [
  ["Symmetry", 0, "w-[57px]"],
  ["Shift", 1, "w-[30px]"],
  ["Scale", 3, "w-[32px]"],
  ["Rotation", 0, "w-[52px]"],
  ["Blur & opacity", 0, "w-[75px]"],
  ["Color", 2, "w-[35px]"],
  ["Trace", 0, "w-[34px]"],
];

function TiledClones() {
  const bars = "size-2 from-[#777] to-[#ddd] bg-[length:3px_3px]";

  return (
    <section>
      <PanelTitle icon="clones">Create Tiled Clones</PanelTitle>
      <div className="pr-2 pl-[9px]">
        <div role="tablist" className="mt-[9px] flex h-[22px] items-end pl-0.5">
          {tabs.map(([name, at, w]) => (
            <button
              key={name}
              role="tab"
              aria-selected={name === "Rotation"}
              className={`shrink-0 border border-b-0 text-center whitespace-nowrap ${w} ${
                name === "Rotation"
                  ? "h-[22px] border-[#9a9c9c] bg-[#fcfefb]"
                  : "h-5 border-[#a3a5a5] bg-linear-to-b from-[#e9eae9] to-[#c9cbca]"
              }`}
            >
              <Mn text={name} at={at} />
            </button>
          ))}
        </div>
        <div role="tabpanel" className="-mt-px grid h-[247px] grid-cols-[74px_58px_69px_1fr] grid-rows-[20px_21px_26px_24px] content-start items-center border border-[#9a9c9c] bg-[#fcfefb] pt-2.5 pr-2">
          <span />
          <span className="flex items-center gap-1 text-[9px]">
            <i className={`${bars} bg-linear-to-b`} />
            Per row:
          </span>
          <span className="flex items-center gap-1 text-[9px] whitespace-nowrap">
            <i className={`${bars} bg-linear-to-r`} />
            Per column:
          </span>
          <span className="text-[9px]">Randomize:</span>

          <b className="pl-1.5 text-center">Angle:</b>
          <span className="flex items-start gap-0.5"><Spin label="Angle per row" value="0.000" width="w-11" /><span className="leading-[14px]">°</span></span>
          <span className="flex items-start gap-0.5"><Spin label="Angle per column" value="9.000" width="w-11" /><span className="leading-[14px]">°</span></span>
          <span className="flex items-start gap-0.5"><Spin label="Randomize angle" value="0.000" width="w-11" atMin /><span className="leading-[14px]">%</span></span>

          <span className="pl-1.5 text-center text-[9px]">Alternate:</span>
          <span className="flex pl-0.5"><Check label="Alternate rows" /></span>
          <span className="flex pl-0.5"><Check label="Alternate columns" /></span>
          <span />

          <span className="pl-1.5 text-center text-[9px]">Cumulate:</span>
          <span className="flex pl-0.5"><Check label="Cumulate rows" /></span>
          <span className="flex pl-0.5"><Check label="Cumulate columns" /></span>
        </div>

        <p className="flex h-[22px] items-center">Apply to tiled clones:</p>
        <div className="mt-1 flex h-6 items-center pl-[11px]">
          <Radio id="rows" checked />
          <label htmlFor="rows" className="w-[90px] pl-[6px]">Rows, columns:</label>
          <Spin label="Rows" value="1" width="w-[54px]" atMin />
          <span className="w-4 text-center">×</span>
          <Spin label="Columns" value="40" width="w-[54px]" />
        </div>
        <div className="flex h-6 items-center pl-[11px]">
          <Radio id="size" />
          <label htmlFor="size" className="w-[90px] pl-[6px]">Width, height:</label>
          <Spin label="Width" value="13.2292" width="w-[54px]" disabled />
          <span className="w-4 text-center">×</span>
          <Spin label="Height" value="13.2292" width="w-[54px]" disabled />
          <span className="w-1" />
          <Combo label="Tile unit" value="mm" className="h-5 w-[46px]" disabled />
        </div>
        <div className="mt-[3px] flex h-6 items-center gap-1.5 pl-0.5">
          <Check id="saved" checked />
          <label htmlFor="saved">Use saved size and position of the tile</label>
        </div>
        <div className="mt-0.5 flex items-center pl-px">
          <button className={`w-[38px] ${button}`}><Mn text="Reset" at={1} /></button>
          <span className="flex-1" />
          <button disabled className="h-5 w-[51px] rounded-[2px] border border-[#b2b4b4] text-[#8d8f8e]"><Mn text="Remove" at={2} /></button>
          <button disabled className="ml-0.5 h-5 w-14 rounded-[2px] border border-[#b2b4b4] text-[#8d8f8e]"><Mn text="Unclump" at={0} /></button>
          <button className={`ml-[5px] w-[46px] font-bold ${button}`}><Mn text="Create" at={0} /></button>
        </div>
        <p className="flex h-5 items-center text-[9px]">Nothing selected.</p>
      </div>
      <div className="mt-1 mb-1 h-px bg-[#fafafa]" />
    </section>
  );
}

function ExportField({ id, label, at, cell }: { id: string; label: string; at?: number; cell: string }) {
  return (
    <>
      <label htmlFor={id} className={`text-center ${cell}`}><Mn text={label} at={at} /></label>
      <Spin id={id} value="0.000" width="w-[55px]" atMin={label.length > 4} />
    </>
  );
}

function ExportPng() {
  const area = "h-5 flex-1 rounded-[2px] border";

  return (
    <section>
      <PanelTitle icon="export">Export PNG Image (Shift+Ctrl+E)</PanelTitle>
      <div className="pr-1.5 pl-[7px]">
        <h3 className="flex h-[27px] items-center font-bold">Export area</h3>
        <div className="flex gap-0.5">
          {["Page", "Drawing", "Selection"].map((t) => (
            <button key={t} className={`${area} border-[#7d8183] bg-linear-to-b from-[#f6f6f5] to-[#d0d2d1]`}><Mn text={t} at={0} /></button>
          ))}
          <button aria-pressed="true" className={`${area} border-[#2f5f80] bg-linear-to-b from-[#d6effc] via-[#a5d6f1] to-[#69b1dc]`}><Mn text="Custom" at={0} /></button>
        </div>
        <div className="mt-1 grid auto-rows-[24px] grid-cols-[85px_80px_85px_1fr] items-center">
          <ExportField id="x0" label="x0:" at={0} cell="pr-5" />
          <ExportField id="y0" label="y0:" at={0} cell="pr-6" />
          <ExportField id="x1" label="x1:" at={1} cell="pr-5" />
          <ExportField id="y1" label="y1:" at={1} cell="pr-6" />
          <ExportField id="ew" label="Width:" at={3} cell="pr-5" />
          <ExportField id="eh" label="Height:" cell="pr-6" />
        </div>
        <div className="flex h-[21px] items-center justify-end gap-[3px]">
          <label htmlFor="units">Units:</label>
          <Combo id="units" value="mm" className="h-[18px] w-[46px]" />
        </div>
        <h3 className="flex h-[21px] items-center font-bold">Image size</h3>
        <div className="flex gap-[89px] pl-[70px]">
          <Spin label="Image width" value="" width="w-[55px]" />
          <Spin label="Image height" value="" width="w-[55px]" />
        </div>
      </div>
    </section>
  );
}

function Dock() {
  return (
    <aside className="flex w-[360px] shrink-0 bg-[#ecedeb] pt-0.5 pl-[5px]">
      <div className="min-w-0 flex-1 overflow-hidden border-t border-l-2 border-t-[#555] border-l-[#2a2a2a]">
        <TiledClones />
        <ExportPng />
      </div>
      <div className="ml-1 flex w-[15px] shrink-0 flex-col items-center border-l border-[#fafafa] py-1">
        <Arrow dir="up" className="size-1.5 text-[#777]" />
        <span className="h-[5px]" />
        <span className={`grow-[466] ${thumbV}`}><Grip vertical /></span>
        <span className="grow-[146]" />
        <Arrow dir="down" />
      </div>
    </aside>
  );
}

/* ---------- side bars ---------- */

function Toolbox() {
  return (
    <nav className={`w-[30px] shrink-0 pt-0.5 pl-px ${bar}`}>
      <svg className="absolute size-0" aria-hidden="true">
        <defs>
          <linearGradient id="blue" x2="1" y2="1"><stop stopColor="#a9c6de" /><stop offset="1" stopColor="#f3f8fc" /></linearGradient>
          <linearGradient id="pink" x2="1" y2="1"><stop stopColor="#fce9ea" /><stop offset="1" stopColor="#f2a6ac" /></linearGradient>
          <linearGradient id="green" x2="1" y2="1"><stop stopColor="#3f9f63" /><stop offset="1" stopColor="#f0f8f0" /></linearGradient>
        </defs>
      </svg>
      <div className="flex h-[560px] flex-col justify-between">
        {tools.map(([name, art], i) => (
          <button
            key={name}
            aria-label={name}
            className={`flex h-[26px] w-[27px] items-center justify-center rounded-[3px] border ${
              i === 0 ? "border-[#676d7c] bg-[#c3c9da]" : "border-transparent"
            }`}
          >
            <svg viewBox="0 0 24 24" className="size-[22px]" fill="none">{art}</svg>
          </button>
        ))}
      </div>
    </nav>
  );
}

function SideBar({ groups, width }: { groups: string[][]; width: string }) {
  return (
    <div className={`flex shrink-0 flex-col items-center pt-[3px] ${width} ${bar}`}>
      {groups.map((g, i) => (
        <div key={i} className="flex flex-col items-center">
          {i > 0 && <span className="my-[5px] h-px w-3.5 bg-[#f4f6fb]" />}
          {g.map((n, j) => (
            <button
              key={j}
              aria-label={n.replace("*", "")}
              className={`flex h-[23px] w-[23px] items-center justify-center rounded-[3px] border ${
                n.endsWith("*") ? "border-[#676d7c] bg-[#c3c9da]" : "border-transparent"
              }`}
            >
              <Icon name={n.replace("*", "")} className={width === "w-[27px]" ? "size-3.5" : "size-[15px]"} />
            </button>
          ))}
        </div>
      ))}
      {width !== "w-[27px]" && <span className="mt-2.5 text-sm text-[#4a55b0]">»</span>}
    </div>
  );
}

/* ---------- bottom ---------- */

function Palette() {
  return (
    <div className="flex h-[15px] shrink-0 border-t border-b-2 border-t-[#555] border-b-[#f4f4f2] bg-[#ecedeb] pr-[3px]">
      <button aria-label="No colour" className="w-[15px] shrink-0 bg-white">
        <svg viewBox="0 0 15 12" className="h-3 w-[15px]"><path d="M2 0l11 12M13 0L2 12" stroke="#7c2b2b" strokeWidth="1.2" /><path d="M.5 0v12" stroke="#333" /></svg>
      </button>
      {palette.map((c, i) => (
        <button key={i} aria-label={`#${c}`} className="min-w-0 flex-1" style={{ backgroundColor: `#${c}` }} />
      ))}
      <Arrow dir="left" className="ml-px size-1.5 text-black" />
    </div>
  );
}

function StatusBar() {
  return (
    <footer className="h-5 shrink-0 overflow-hidden bg-[#ecedeb] text-[#2a2a2a]">
      <div className="flex h-6 items-center">
        <div className="grid w-[105px] shrink-0 grid-cols-[62px_1fr] pl-0.5 leading-3">
          <span>Fill:</span><span>N/A</span>
          <span>Stroke:</span><span>N/A</span>
        </div>
        <label htmlFor="opacity" className="w-5 shrink-0 pl-2">O:</label>
        <Spin id="opacity" value="0" width="w-[42px]" disabled />
        <span className="mx-0.5 h-5 w-px shrink-0 bg-[#aaa]" />
        <button aria-label="Layer visible" className="flex w-[17px] shrink-0 justify-center"><Icon name="eye" className="size-2.5" /></button>
        <button aria-label="Layer lock" className="flex w-[17px] shrink-0 justify-center"><Icon name="openLock" className="size-2.5" /></button>
        <Combo label="Layer" value="•Gear40" className="h-5 w-[71px] pl-2.5 text-[9px] font-bold" />
        <p className="min-w-0 flex-1 truncate pl-0.5">
          No objects selected. Click, Shift+click, Alt+scroll mouse on top of objects, or drag around objects to select.
        </p>
        <div className="grid w-[58px] shrink-0 grid-cols-[14px_1fr] border-l border-[#aaa] pl-0.5 leading-3">
          <span>X:</span><span className="text-right font-['Liberation_Mono',monospace]">82.40</span>
          <span>Y:</span><span className="text-right font-['Liberation_Mono',monospace]">175.76</span>
        </div>
        <label htmlFor="zoom" className="w-[17px] shrink-0 pl-2">Z:</label>
        <Spin id="zoom" value="140%" width="w-[50px]" />
      </div>
    </footer>
  );
}

export default function App() {
  return (
    <div className="flex h-screen w-full flex-col overflow-hidden bg-[#ecedeb] font-['Noto_Sans','Open_Sans',sans-serif] text-[10px] leading-4 text-[#2a2a2a]">
      <SelectorBar />
      <div className="flex min-h-0 flex-1">
        <Toolbox />
        <Canvas />
        <Dock />
        <SideBar groups={commands} width="w-[28px]" />
        <SideBar groups={snaps} width="w-[27px]" />
      </div>
      <Palette />
      <div className="flex h-4 shrink-0 items-center border-b border-[#e0e1e0] bg-[#e8e9e7] px-[5px]">
        <Arrow dir="left" />
        <span className="w-[5px]" />
        <span className={`h-[13px] w-[291px] ${thumbH}`}><Grip /></span>
        <span className="flex-1" />
        <Arrow dir="right" />
        <span className="w-2" />
      </div>
      <StatusBar />
    </div>
  );
}
